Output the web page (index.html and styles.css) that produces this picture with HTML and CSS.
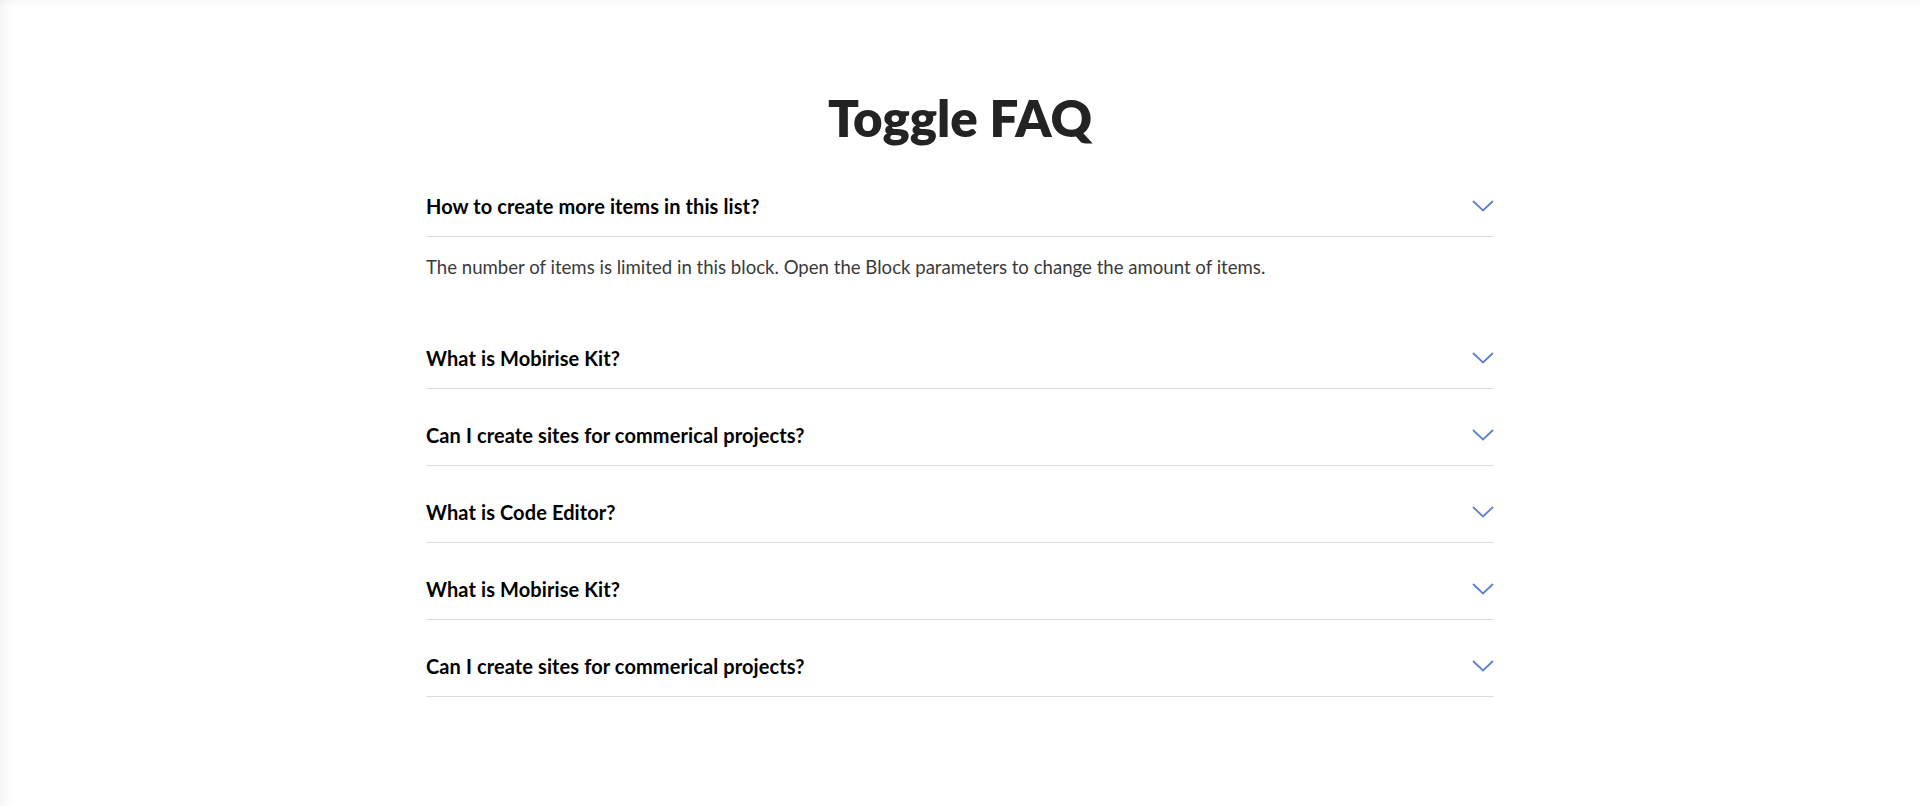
FILE: index.html
```html
<!DOCTYPE html>
<html lang="en">
<head>
<meta charset="utf-8">
<title>Toggle FAQ</title>
<link rel="stylesheet" href="styles.css">
</head>
<body>
<div class="page">
  <section class="faq">
    <h2 class="faq-title">Toggle FAQ</h2>
    <div class="faq-list">
      <div class="faq-item open">
        <div class="faq-head">
          <span class="faq-q">How to create more items in this list?</span>
          <svg class="chev" width="22" height="12" viewBox="0 0 22 12"><polyline points="1,1 11,10.5 21,1" fill="none" stroke="#5f80cf" stroke-width="1.8"/></svg>
        </div>
        <div class="faq-body">
          <p class="faq-a">The number of items is limited in this block. Open the Block parameters to change the amount of items.</p>
        </div>
      </div>
      <div class="faq-item">
        <div class="faq-head">
          <span class="faq-q">What is Mobirise Kit?</span>
          <svg class="chev" width="22" height="12" viewBox="0 0 22 12"><polyline points="1,1 11,10.5 21,1" fill="none" stroke="#5f80cf" stroke-width="1.8"/></svg>
        </div>
      </div>
      <div class="faq-item">
        <div class="faq-head">
          <span class="faq-q">Can I create sites for commerical projects?</span>
          <svg class="chev" width="22" height="12" viewBox="0 0 22 12"><polyline points="1,1 11,10.5 21,1" fill="none" stroke="#5f80cf" stroke-width="1.8"/></svg>
        </div>
      </div>
      <div class="faq-item">
        <div class="faq-head">
          <span class="faq-q">What is Code Editor?</span>
          <svg class="chev" width="22" height="12" viewBox="0 0 22 12"><polyline points="1,1 11,10.5 21,1" fill="none" stroke="#5f80cf" stroke-width="1.8"/></svg>
        </div>
      </div>
      <div class="faq-item">
        <div class="faq-head">
          <span class="faq-q">What is Mobirise Kit?</span>
          <svg class="chev" width="22" height="12" viewBox="0 0 22 12"><polyline points="1,1 11,10.5 21,1" fill="none" stroke="#5f80cf" stroke-width="1.8"/></svg>
        </div>
      </div>
      <div class="faq-item">
        <div class="faq-head">
          <span class="faq-q">Can I create sites for commerical projects?</span>
          <svg class="chev" width="22" height="12" viewBox="0 0 22 12"><polyline points="1,1 11,10.5 21,1" fill="none" stroke="#5f80cf" stroke-width="1.8"/></svg>
        </div>
      </div>
    </div>
  </section>
</div>
</body>
</html>
```
FILE: styles.css
```css
html, body {
  margin: 0;
  padding: 0;
  background: #ffffff;
}
body {
  font-family: Lato, "Liberation Sans", sans-serif;
}
.page {
  min-height: 806px;
  box-sizing: border-box;
  box-shadow: inset 0 10px 10px -8px rgba(0, 0, 0, 0.04), inset 12px 0 12px -8px rgba(0, 0, 0, 0.05);
  padding-top: 88px;
}
.faq {
  width: 1068px;
  margin: 0 auto;
}
.faq-title {
  margin: 0;
  text-align: center;
  font-size: 51px;
  line-height: 60px;
  font-weight: 800;
  color: #232323;
}
.faq-list {
  margin-top: 45px;
}
.faq-item {
  border-bottom: 1px solid #dedede;
}
.faq-item.open {
  border-bottom: none;
}
.faq-item + .faq-item .faq-head {
  padding-top: 33px;
}
.faq-head {
  display: flex;
  align-items: center;
  justify-content: space-between;
  padding-bottom: 17px;
  border-bottom: 1px solid #dedede;
}
.faq-item:not(.open) .faq-head {
  border-bottom: none;
}
.faq-q {
  font-size: 20px;
  line-height: 26px;
  font-weight: 700;
  letter-spacing: 0.1px;
  color: #000;
}
.chev {
  display: block;
}
.faq-body {
  padding-top: 17px;
  padding-bottom: 31px;
}
.faq-a {
  margin: 0;
  font-size: 18.6px;
  line-height: 27px;
  font-weight: 400;
  color: #3a3a3a;
}
```
